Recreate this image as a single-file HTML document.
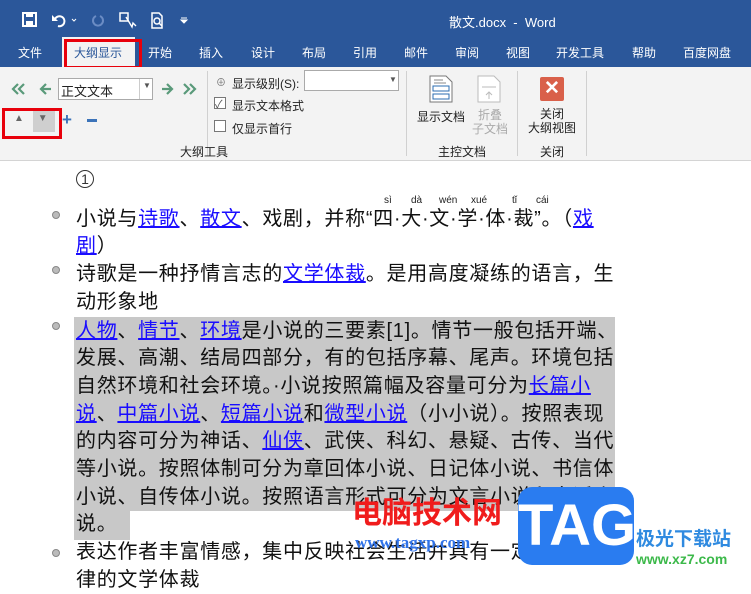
<!DOCTYPE html>
<html><head><meta charset="utf-8"><style>
*{margin:0;padding:0;box-sizing:border-box}
body{width:751px;height:576px;overflow:hidden;background:#fff;font-family:"Liberation Sans","Noto Sans CJK SC",sans-serif;position:relative}
.abs{position:absolute}
.title{left:0;top:0;width:751px;height:67px;background:#2b579a}
.tab{position:absolute;top:44px;color:#fff;font-size:12px}
.rib{left:0;top:67px;width:751px;height:94px;background:#f3f3f3;border-bottom:1px solid #d4d4d4}
.s{font-size:12px;color:#222;position:absolute;white-space:nowrap}
.vsep{position:absolute;top:71px;width:1px;height:85px;background:#d0d0d0}
.ln{position:absolute;left:76px;font-size:20px;line-height:28px;height:28px;color:#111;white-space:nowrap;letter-spacing:0.7px}
.ln a{color:#1a0dff;text-decoration:underline}
.b{position:absolute;left:52px;width:8px;height:8px;border-radius:50%;background:#bbb;border:1px solid #888}
.hl{background:#c8c8c8}
</style></head><body>
<div class="abs title"></div>
<svg class="abs" style="left:22px;top:11px" width="170" height="18" viewBox="0 0 170 18">
<rect x="1" y="2" width="13" height="13" fill="none" stroke="#fff" stroke-width="2"/><rect x="4" y="2" width="7" height="4" fill="#fff"/><rect x="4" y="10" width="7" height="5" fill="#fff"/>
<path d="M33 8a5 5 0 1 1 3 7" fill="none" stroke="#fff" stroke-width="2"/><path d="M30 4v6h6z" fill="#fff"/>
<path d="M50 8l2 2 2-2" fill="none" stroke="#fff"/>
<path d="M78 5a5 5 0 1 1-4 0" fill="none" stroke="#6b8cc4" stroke-width="2"/>
<rect x="98" y="2" width="8" height="8" fill="none" stroke="#fff" stroke-width="1.5"/><path d="M104 6l6 10 1-4 3 3" fill="none" stroke="#fff" stroke-width="1.4"/>
<path d="M130 2h7l3 3v12h-10z" fill="none" stroke="#fff" stroke-width="1.5"/><circle cx="135" cy="10" r="3" fill="none" stroke="#fff" stroke-width="1.5"/><path d="M137 12l3 3" stroke="#fff" stroke-width="1.5"/>
<path d="M159 7h6M159 9l3 3 3-3z" stroke="#fff" fill="#fff"/>
</svg>
<div class="abs" style="left:449px;top:12px;color:#fff;font-size:13px">散文.docx &nbsp;-&nbsp; Word</div>
<div class="abs" style="left:62px;top:37px;width:73px;height:31px;background:#f3f3f3"></div>
<div class="abs" style="left:64px;top:39px;width:78px;height:30px;border:3px solid #e8000b"></div>
<div class="tab" style="left:18px">文件</div>
<div class="tab" style="left:74px;color:#2b579a">大纲显示</div>
<div class="tab" style="left:148px">开始</div>
<div class="tab" style="left:199px">插入</div>
<div class="tab" style="left:251px">设计</div>
<div class="tab" style="left:302px">布局</div>
<div class="tab" style="left:353px">引用</div>
<div class="tab" style="left:404px">邮件</div>
<div class="tab" style="left:455px">审阅</div>
<div class="tab" style="left:506px">视图</div>
<div class="tab" style="left:556px">开发工具</div>
<div class="tab" style="left:632px">帮助</div>
<div class="tab" style="left:683px">百度网盘</div>
<div class="abs rib"></div>
<svg class="abs" style="left:10px;top:82px" width="45" height="14"><path d="M8 2l-5 5 5 5M14 2l-5 5 5 5M36 2l-5 5 5 5M31 7h10" fill="none" stroke="#5a9a7a" stroke-width="2.2"/></svg>
<div class="abs" style="left:58px;top:78px;width:95px;height:22px;background:#fff;border:1px solid #aaa"></div>
<div class="abs" style="left:139px;top:79px;width:1px;height:20px;background:#ccc"></div>
<div class="s" style="left:61px;top:81px;font-size:13px">正文文本</div>
<div class="s" style="left:143px;top:81px;font-size:8px;color:#555">▼</div>
<svg class="abs" style="left:158px;top:82px" width="45" height="14"><path d="M4 7h9M9 2l5 5-5 5M26 2l5 5-5 5M32 2l5 5-5 5" fill="none" stroke="#5a9a7a" stroke-width="2.2"/></svg>
<div class="abs" style="left:33px;top:108px;width:22px;height:24px;background:#cfcfcf"></div>
<div class="s" style="left:14px;top:113px;font-size:10px;color:#666">▲&nbsp;&nbsp;&nbsp;&nbsp;&nbsp;▼</div>
<div class="abs" style="left:2px;top:108px;width:60px;height:31px;border:3px solid #e8000b"></div>
<div class="s" style="left:62px;top:110px;font-size:17px;font-weight:bold;color:#3b73b9">+</div>
<div class="abs" style="left:87px;top:119px;width:10px;height:3px;background:#3b73b9"></div>
<div class="vsep" style="left:207px"></div>
<div class="s" style="left:216px;top:74px;color:#777;font-size:10px">⊕</div>
<div class="s" style="left:232px;top:75px">显示级别(S):</div>
<div class="abs" style="left:304px;top:70px;width:95px;height:21px;background:#fff;border:1px solid #aaa"></div>
<div class="s" style="left:389px;top:75px;font-size:8px;color:#555">▼</div>
<div class="abs" style="left:214px;top:97px;width:12px;height:12px;border:1px solid #777;background:#fff"></div>
<div class="s" style="left:215px;top:96px;font-size:11px;color:#555">✓</div>
<div class="s" style="left:232px;top:97px">显示文本格式</div>
<div class="abs" style="left:214px;top:120px;width:12px;height:12px;border:1px solid #777;background:#fff"></div>
<div class="s" style="left:232px;top:120px">仅显示首行</div>
<div class="s" style="left:180px;top:143px">大纲工具</div>
<div class="vsep" style="left:406px"></div>
<svg class="abs" style="left:429px;top:75px" width="24" height="28"><path d="M1 1h16l6 6v20H1z" fill="#fff" stroke="#777"/><rect x="4" y="11" width="16" height="5" fill="none" stroke="#2b6cb0"/><rect x="4" y="19" width="16" height="5" fill="none" stroke="#2b6cb0"/><path d="M5 5h9M5 8h12" stroke="#888"/></svg>
<div class="s" style="left:417px;top:108px">显示文档</div>
<svg class="abs" style="left:477px;top:75px" width="24" height="28"><path d="M1 1h16l6 6v20H1z" fill="#fff" stroke="#bbb"/><path d="M5 12h14M12 24v-7M9 20l3-3 3 3" stroke="#bbb" fill="none"/></svg>
<div class="s" style="left:472px;top:108px;color:#aaa;line-height:14px;text-align:center">折叠<br>子文档</div>
<div class="s" style="left:438px;top:143px">主控文档</div>
<div class="vsep" style="left:517px"></div>
<div class="abs" style="left:540px;top:77px;width:24px;height:24px;background:#d9604a;border-radius:2px;color:#fff;font-size:19px;font-weight:bold;text-align:center;line-height:24px">✕</div>
<div class="s" style="left:528px;top:107px;line-height:14px;text-align:center">关闭<br>大纲视图</div>
<div class="s" style="left:540px;top:143px">关闭</div>
<div class="vsep" style="left:586px"></div>

<div class="abs" style="left:76px;top:170px;width:18px;height:18px;border:1px solid #333;border-radius:50%;font-size:14px;text-align:center;line-height:16px;color:#333">1</div>
<div class="abs" style="left:384px;top:195px;font-size:10px;color:#222">sì</div>
<div class="abs" style="left:411px;top:195px;font-size:10px;color:#222">dà</div>
<div class="abs" style="left:439px;top:195px;font-size:10px;color:#222">wén</div>
<div class="abs" style="left:471px;top:195px;font-size:10px;color:#222">xué</div>
<div class="abs" style="left:512px;top:195px;font-size:10px;color:#222">tǐ</div>
<div class="abs" style="left:536px;top:195px;font-size:10px;color:#222">cái</div>
<div class="b" style="top:211px"></div>
<div class="ln" style="top:205px">小说与<a>诗歌</a>、<a>散文</a>、戏剧，并称“四·大·文·学·体·裁”。（<a>戏</a></div>
<div class="ln" style="top:232px"><a>剧</a>）</div>
<div class="b" style="top:266px"></div>
<div class="ln" style="top:260px">诗歌是一种抒情言志的<a>文学体裁</a>。是用高度凝练的语言，生</div>
<div class="ln" style="top:288px">动形象地</div>
<div class="abs hl" style="left:74px;top:317px;width:541px;height:194px"></div>
<div class="abs hl" style="left:74px;top:511px;width:56px;height:29px"></div>
<div class="b" style="top:322px"></div>
<div class="ln" style="top:317px"><a>人物</a>、<a>情节</a>、<a>环境</a>是小说的三要素[1]。情节一般包括开端、</div>
<div class="ln" style="top:344px">发展、高潮、结局四部分，有的包括序幕、尾声。环境包括</div>
<div class="ln" style="top:372px">自然环境和社会环境。·小说按照篇幅及容量可分为<a>长篇小</a></div>
<div class="ln" style="top:400px"><a>说</a>、<a>中篇小说</a>、<a>短篇小说</a>和<a>微型小说</a>（小小说）。按照表现</div>
<div class="ln" style="top:427px">的内容可分为神话、<a>仙侠</a>、武侠、科幻、悬疑、古传、当代</div>
<div class="ln" style="top:455px">等小说。按照体制可分为章回体小说、日记体小说、书信体</div>
<div class="ln" style="top:483px">小说、自传体小说。按照语言形式可分为文言小说和白话小</div>
<div class="ln" style="top:510px">说。</div>
<div class="b" style="top:549px"></div>
<div class="ln" style="top:538px">表达作者丰富情感，集中反映社会生活并具有一定节奏和韵</div>
<div class="ln" style="top:566px">律的文学体裁</div>
<div class="abs" style="left:600px;top:507px;width:151px;height:69px;background:rgba(255,255,255,.85)"></div>
<div class="abs" style="left:352px;top:488px;font-size:30px;font-weight:bold;color:#f01c1c;white-space:nowrap">电脑技术网</div>
<div class="abs" style="left:355px;top:533px;font-size:17px;font-weight:bold;color:#2f72e8;white-space:nowrap;font-family:'Liberation Serif',serif">www.tagxp.com</div>
<div class="abs" style="left:518px;top:487px;width:116px;height:78px;background:#2a7cf0;border-radius:14px;color:#fff;font-size:58px;font-weight:bold;text-align:center;line-height:78px">TAG</div>
<div class="abs" style="left:636px;top:524px;font-size:19px;font-weight:bold;color:#2f8ae0;white-space:nowrap">极光下载站</div>
<div class="abs" style="left:636px;top:551px;font-size:14px;font-weight:bold;color:#3cb94a;white-space:nowrap">www.xz7.com</div>
</body></html>
